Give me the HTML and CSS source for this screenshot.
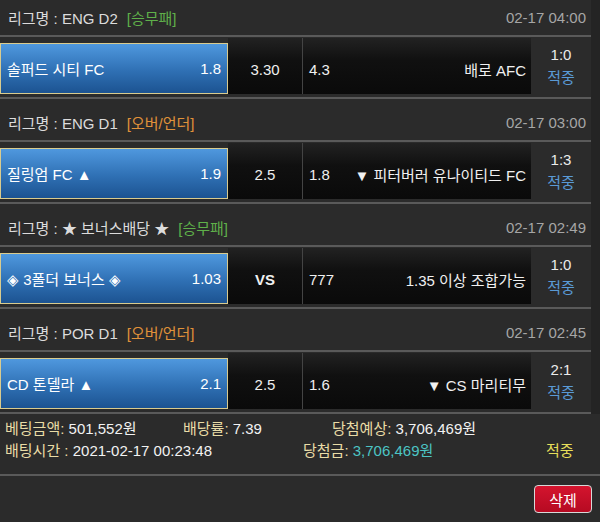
FILE: index.html
```html
<!DOCTYPE html>
<html>
<head>
    <link rel="stylesheet" href="styles.css">
</head>
<body>
    <div class="slip-wrap">
        <div class="slip">
            <div class="game">
                <div class="game-head">
                    <span class="league">리그명 : ENG D2</span>
                    <span class="bet-type type-win">[승무패]</span>
                    <span class="game-time">02-17 04:00</span>
                </div>
                <div class="game-row">
                    <div class="pick">
                        <span class="team">솔퍼드 시티 FC</span>
                        <span class="odd">1.8</span>
                    </div>
                    <div class="cell draw">3.30</div>
                    <div class="cell away">
                        <span class="odd">4.3</span>
                        <span class="team">배로 AFC</span>
                    </div>
                    <div class="result">
                        <span class="score">1:0</span>
                        <span class="hit">적중</span>
                    </div>
                </div>
            </div>

            <div class="game">
                <div class="game-head">
                    <span class="league">리그명 : ENG D1</span>
                    <span class="bet-type type-ou">[오버/언더]</span>
                    <span class="game-time">02-17 03:00</span>
                </div>
                <div class="game-row">
                    <div class="pick">
                        <span class="team">질링엄 FC ▲</span>
                        <span class="odd">1.9</span>
                    </div>
                    <div class="cell draw">2.5</div>
                    <div class="cell away">
                        <span class="odd">1.8</span>
                        <span class="team">▼ 피터버러 유나이티드 FC</span>
                    </div>
                    <div class="result">
                        <span class="score">1:3</span>
                        <span class="hit">적중</span>
                    </div>
                </div>
            </div>

            <div class="game">
                <div class="game-head">
                    <span class="league">리그명 : ★ 보너스배당 ★</span>
                    <span class="bet-type type-win">[승무패]</span>
                    <span class="game-time">02-17 02:49</span>
                </div>
                <div class="game-row">
                    <div class="pick">
                        <span class="team">◈ 3폴더 보너스 ◈</span>
                        <span class="odd">1.03</span>
                    </div>
                    <div class="cell draw vs">VS</div>
                    <div class="cell away">
                        <span class="odd">777</span>
                        <span class="team">1.35 이상 조합가능</span>
                    </div>
                    <div class="result">
                        <span class="score">1:0</span>
                        <span class="hit">적중</span>
                    </div>
                </div>
            </div>

            <div class="game">
                <div class="game-head">
                    <span class="league">리그명 : POR D1</span>
                    <span class="bet-type type-ou">[오버/언더]</span>
                    <span class="game-time">02-17 02:45</span>
                </div>
                <div class="game-row">
                    <div class="pick">
                        <span class="team">CD 톤델라 ▲</span>
                        <span class="odd">2.1</span>
                    </div>
                    <div class="cell draw">2.5</div>
                    <div class="cell away">
                        <span class="odd">1.6</span>
                        <span class="team">▼ CS 마리티무</span>
                    </div>
                    <div class="result">
                        <span class="score">2:1</span>
                        <span class="hit">적중</span>
                    </div>
                </div>
            </div>
        </div>
    </div>

    <div class="summary">
        <div class="summary-line">
            <span class="sum-item sum-amount"><span class="label">베팅금액:</span> 501,552원</span>
            <span class="sum-item sum-rate"><span class="label">배당률:</span> 7.39</span>
            <span class="sum-item"><span class="label">당첨예상:</span> 3,706,469원</span>
        </div>
        <div class="summary-line">
            <span class="sum-item sum-time"><span class="label">배팅시간 :</span> 2021-02-17 00:23:48</span>
            <span class="sum-item sum-win"><span class="label">당첨금:</span> <span class="win-amount">3,706,469원</span></span>
            <span class="sum-item sum-status">적중</span>
        </div>
    </div>

    <div class="actions">
        <button class="btn-delete">삭제</button>
    </div>
</body>
</html>
```

FILE: styles.css
```css
body {
    margin: 0;
    background: #2b2b2b;
    font-family: 'Liberation Sans', 'Noto Sans CJK KR', sans-serif;
    font-size: 15px;
    color: #e6e6e6;
}

.slip-wrap {
    background: #242424;
}

.slip {
    margin-right: 9px;
    background: #2b2b2b;
}

.game {
    margin-bottom: 6px;
}

.game:last-child {
    margin-bottom: 0;
}

.game-head {
    display: flex;
    align-items: center;
    height: 35px;
    padding: 0 5px 0 8px;
    border-bottom: 2px solid #5a5a5a;
}

.league {
    color: #dcdcdc;
}

.bet-type {
    margin-left: 9px;
}

.type-win {
    color: #5fb04a;
}

.type-ou {
    color: #e0923a;
}

.game-time {
    margin-left: auto;
    color: #a6a6a6;
}

.game-row {
    display: flex;
    align-items: flex-end;
    padding: 1px 0 3px;
    border-bottom: 2px solid #5a5a5a;
}

.pick {
    display: flex;
    align-items: center;
    justify-content: space-between;
    box-sizing: border-box;
    width: 228px;
    height: 51px;
    padding: 0 6px 0 6px;
    border: 1px solid #d9cb8e;
    background: linear-gradient(to bottom, #4f98de, #2f70b4 55%, #1c5391);
    color: #fff;
}

.cell {
    display: flex;
    align-items: center;
    box-sizing: border-box;
    height: 56px;
    padding-top: 6px;
    background: linear-gradient(to bottom, #222, #101010 40%, #0a0a0a);
    color: #f0f0f0;
}

.draw {
    width: 74px;
    justify-content: center;
}

.vs {
    font-weight: bold;
}

.away {
    width: 229px;
    justify-content: space-between;
    padding-left: 6px;
    padding-right: 5px;
    border-left: 1px solid #444;
}

.result {
    display: flex;
    flex-direction: column;
    align-items: center;
    justify-content: center;
    flex: 1;
    height: 56px;
    line-height: 23px;
}

.score {
    color: #ececec;
}

.hit {
    color: #5a9ad6;
}

.summary {
    padding: 4px 0 12px 5px;
    border-bottom: 2px solid #5a5a5a;
}

.summary-line {
    display: flex;
    line-height: 22px;
    color: #f2f2f2;
}

.label {
    color: #e9dca6;
}

.sum-amount {
    width: 178px;
}

.sum-rate {
    width: 149px;
}

.sum-time {
    width: 298px;
}

.sum-win {
    width: 243px;
}

.win-amount {
    color: #4cc4c4;
}

.sum-status {
    color: #e6df5a;
}

.actions {
    display: flex;
    justify-content: flex-end;
    padding: 9px 8px 0 0;
}

.btn-delete {
    width: 58px;
    height: 28px;
    border: 1px solid #d8d8d8;
    border-radius: 4px;
    background: linear-gradient(to bottom, #d4142e, #b60a22);
    color: #fff;
    font-family: 'Liberation Sans', 'Noto Sans CJK KR', sans-serif;
    font-size: 15px;
    cursor: pointer;
}
```
